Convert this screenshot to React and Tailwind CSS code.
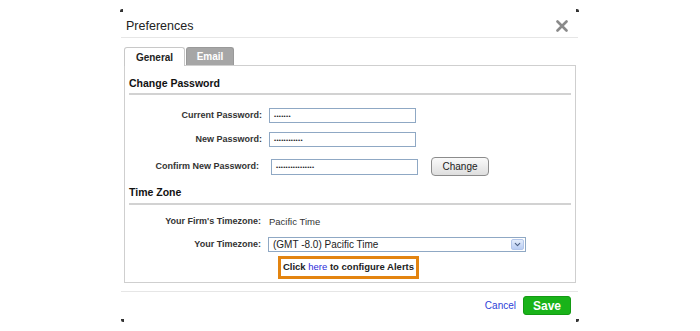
import { ChevronDown } from 'lucide-react';

const font = { fontFamily: '"Liberation Sans", Arial, sans-serif' };

function Corner({ className }) {
  return <span className={`absolute w-[3px] h-[3px] bg-[#333] ${className}`} />;
}

function Dots({ n }) {
  return (
    <span className="text-[6px] leading-none tracking-[0.3px] text-[#222] pl-[4px]">
      {'•'.repeat(n)}
    </span>
  );
}

function Row({ label, labelW, gap, className = '', children }) {
  return (
    <div className={`flex items-center ${className}`}>
      <div className="text-right text-[9px] font-bold text-[#333] shrink-0" style={{ width: labelW, marginRight: gap }}>
        {label}
      </div>
      {children}
    </div>
  );
}

export default function App() {
  return (
    <div className="w-[700px] h-[331px] bg-white overflow-hidden" style={font}>
      <div className="relative ml-[121px] mt-[10px] w-[457px]">
        <Corner className="-left-[1px] -top-[1px] rounded-tl-[2px]" />
        <Corner className="-right-[1px] -top-[1px] rounded-tr-[2px]" />

        {/* Header */}
        <div className="h-[28px] flex items-center justify-between pt-[5px] pl-[5px] pr-[10px] border-b border-[#e6e6e6]">
          <span className="text-[12.5px] text-[#222]">Preferences</span>
          <svg width="12" height="12" viewBox="0 0 12 12">
            <path d="M1.5 1.5 L10.5 10.5 M10.5 1.5 L1.5 10.5" stroke="#8a8a8a" strokeWidth="2.6" strokeLinecap="round" />
          </svg>
        </div>

        {/* Tabs */}
        <div className="mt-[9px] ml-[3px] mr-[2px]">
          <div className="flex items-end gap-[1px] h-[18px]">
            <div className="relative z-10 h-[19px] -mb-px w-[61px] flex items-center justify-center bg-white border border-b-0 border-[#c8c8c8] rounded-t-[3px] text-[10px] font-bold text-[#222]">
              General
            </div>
            <div className="h-[18px] w-[48px] flex items-center justify-center bg-[#a6a6a6] border border-b-0 border-[#999] rounded-t-[3px] text-[10px] font-bold text-white">
              Email
            </div>
          </div>

          {/* Panel */}
          <div className="border border-[#cfcfcf] px-[4px] pb-[3px]">
            <div className="pt-[10px] pb-[3px] border-b-2 border-[#d2d2d2] text-[10.5px] leading-[14px] font-bold text-[#111]">
              Change Password
            </div>

            <Row label="Current Password:" labelW={133} gap={7} className="mt-[13px]">
              <div className="w-[147px] h-[15px] border border-[#8fa8c4] flex items-center">
                <Dots n={7} />
              </div>
            </Row>
            <Row label="New Password:" labelW={133} gap={7} className="mt-[9px]">
              <div className="w-[147px] h-[15px] border border-[#8fa8c4] flex items-center">
                <Dots n={12} />
              </div>
            </Row>
            <Row label="Confirm New Password:" labelW={130} gap={12} className="mt-[10px] h-[19px]">
              <div className="w-[147px] h-[16px] border border-[#8fa8c4] flex items-center">
                <Dots n={16} />
              </div>
              <button className="ml-[13px] w-[58px] h-[19px] rounded-[4px] border border-[#8c8c8c] bg-gradient-to-b from-[#fafafa] to-[#dedede] text-[10px] text-[#222]">
                Change
              </button>
            </Row>

            <div className="mt-[9px] pb-[4px] border-b-2 border-[#d2d2d2] text-[10.5px] leading-[14px] font-bold text-[#111]">
              Time Zone
            </div>

            <Row label="Your Firm's Timezone:" labelW={132} gap={8} className="mt-[10px] h-[14px]">
              <span className="text-[9.5px] text-[#333]">Pacific Time</span>
            </Row>
            <Row label="Your Timezone:" labelW={132} gap={7} className="mt-[8px]">
              <div className="w-[258px] h-[15px] border border-[#8fa8c4] flex items-center justify-between pl-[4px] pr-[1px]">
                <span className="text-[10px] text-[#222]">(GMT -8.0) Pacific Time</span>
                <span className="w-[13px] h-[11px] rounded-[2px] bg-gradient-to-b from-[#e3ecfb] to-[#b9cdf3] border border-[#b3c6ea] flex items-center justify-center">
                  <ChevronDown size={9} strokeWidth={3} color="#4d6185" />
                </span>
              </div>
            </Row>

            <div className="mt-[4px] ml-[149px] w-[141px] h-[23px] border-[3px] border-[#e38410] flex items-center justify-center text-[9.5px] font-bold text-[#222]">
              Click&nbsp;<span className="font-normal text-[#2b2bd9]">here</span>&nbsp;to configure Alerts
            </div>
          </div>
        </div>

        {/* Footer */}
        <div className="mt-[8px] border-t border-[#e6e6e6] flex justify-end items-center pt-[4px] pr-[7px]">
          <a className="text-[10px] text-[#2f3fd8] mr-[7px]">Cancel</a>
          <button className="w-[48px] h-[19px] rounded-[3px] bg-[#19b319] border border-[#139a13] text-white text-[12px] font-bold">
            Save
          </button>
        </div>

        <div className="relative h-[6px]">
          <Corner className="left-0 -bottom-[1px] rounded-bl-[2px]" />
          <Corner className="-right-[1px] -bottom-[1px] rounded-br-[2px]" />
        </div>
      </div>
    </div>
  );
}
